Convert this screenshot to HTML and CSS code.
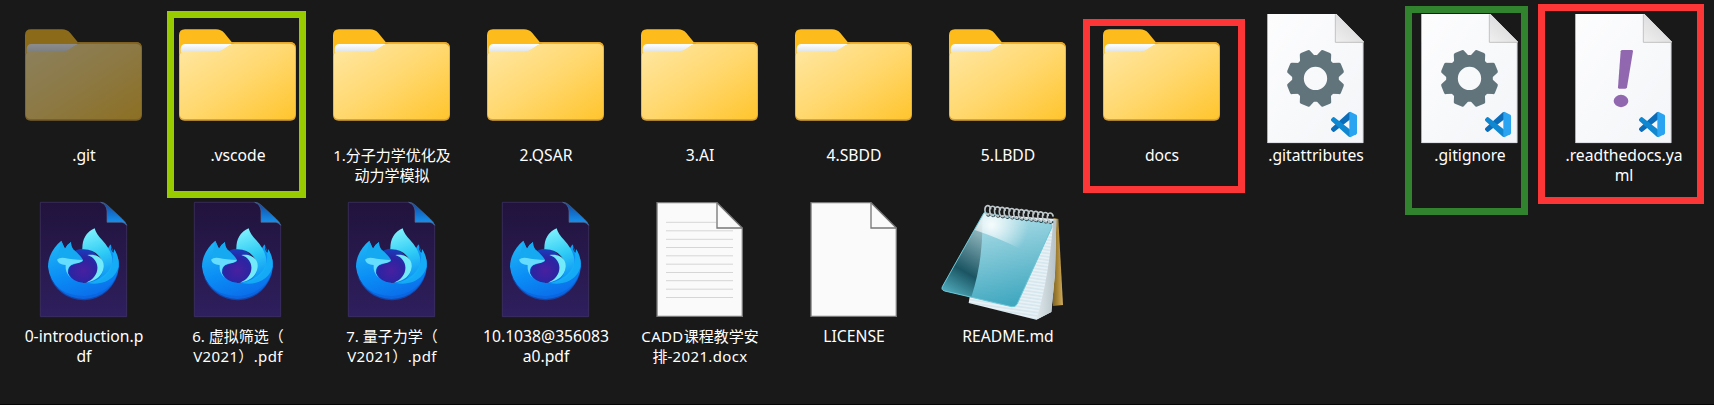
FILE: index.html
```html
<!DOCTYPE html>
<html lang="zh-CN">
<head>
<meta charset="utf-8">
<title>Files</title>
<link rel="stylesheet" href="styles.css">
</head>
<body>
<svg class="defs" aria-hidden="true">
  <defs>
    <linearGradient id="folder-front" x1="0" y1="0" x2="1" y2="1">
      <stop offset="0" stop-color="#ffe8a4"/><stop offset=".5" stop-color="#ffd86f"/><stop offset="1" stop-color="#ffc52e"/>
    </linearGradient>
    <linearGradient id="folder-paper" x1="0" y1="0" x2="0" y2="1">
      <stop offset="0" stop-color="#fff"/><stop offset=".6" stop-color="#e3e8ec"/><stop offset="1" stop-color="#fbe6ab"/>
    </linearGradient>
    <linearGradient id="sheet" x1="0" y1="0" x2="1" y2="1">
      <stop offset="0" stop-color="#fdfdfe"/><stop offset="1" stop-color="#f3f5f8"/>
    </linearGradient>
    <linearGradient id="sheet-fold" x1="0" y1="1" x2=".6" y2=".3">
      <stop offset="0" stop-color="#f0f0f0"/><stop offset="1" stop-color="#dcdcde"/>
    </linearGradient>
    <linearGradient id="fx-page" x1="0" y1="0" x2="0" y2="1">
      <stop offset="0" stop-color="#21133c"/><stop offset="1" stop-color="#2e1f5e"/>
    </linearGradient>
    <linearGradient id="fx-fold" x1="0" y1="0" x2="0" y2="1">
      <stop offset="0" stop-color="#0b4aa5"/><stop offset="1" stop-color="#1a9af5"/>
    </linearGradient>
    <linearGradient id="fx-body" x1=".2" y1="0" x2=".6" y2="1">
      <stop offset="0" stop-color="#1fb5f5"/><stop offset=".55" stop-color="#0a8cf5"/><stop offset="1" stop-color="#0a6cea"/>
    </linearGradient>
    <linearGradient id="fx-tail" x1=".3" y1="0" x2=".5" y2="1">
      <stop offset="0" stop-color="#80f2fc"/><stop offset=".5" stop-color="#30ccf5"/><stop offset="1" stop-color="#0a90f5"/>
    </linearGradient>
    <radialGradient id="fx-core" cx=".5" cy=".65" r=".6">
      <stop offset="0" stop-color="#48209f"/><stop offset=".6" stop-color="#2c24a2"/><stop offset="1" stop-color="#1b3ab8"/>
    </radialGradient>
    <linearGradient id="np-cover" x1=".2" y1="0" x2=".5" y2="1">
      <stop offset="0" stop-color="#b9e4ec"/><stop offset=".45" stop-color="#7cc6d6"/><stop offset="1" stop-color="#35a3bc"/>
    </linearGradient>
    <linearGradient id="np-shade" x1=".6" y1="0" x2=".3" y2="1">
      <stop offset="0" stop-color="#a4c7cd"/><stop offset=".65" stop-color="#1b5563"/><stop offset="1" stop-color="#4faabb"/>
    </linearGradient>
    <radialGradient id="np-glow" cx="215" cy="105" r="110" gradientUnits="userSpaceOnUse">
      <stop offset="0" stop-color="#fff" stop-opacity=".9"/><stop offset="1" stop-color="#fff" stop-opacity="0"/>
    </radialGradient>
    <linearGradient id="np-board" x1="0" y1="0" x2="1" y2="0">
      <stop offset="0" stop-color="#7d6424"/><stop offset=".6" stop-color="#b28d3c"/><stop offset="1" stop-color="#cfae62"/>
    </linearGradient>
    <linearGradient id="np-side" x1="0" y1="0" x2="1" y2="0">
      <stop offset="0" stop-color="#dfe8ec"/><stop offset="1" stop-color="#b5c1c7"/>
    </linearGradient>
    <pattern id="np-rules" width="20" height="10" patternUnits="userSpaceOnUse" patternTransform="rotate(8)">
      <path d="M0 5H20" stroke="#7fb5c9" stroke-width="1.5" opacity=".6"/>
    </pattern>

    <symbol id="folder" viewBox="0 0 154 132">
      <g transform="translate(-6 -13) scale(.33333)">
        <path d="M75 160V106Q75 88 93 88H186Q201 88 211 99L233 126H408Q426 126 426 144V200H75Z" fill="#fdbc1b"/>
        <path d="M234 126H410Q424 128 424 142H220Z" fill="#e5a628"/>
        <path d="M80 165V146Q81 132 94 132H250V160H80Z" fill="url(#folder-paper)"/>
        <path d="M75 166Q77 156 90 156H188Q200 156 208 150L226 137Q233 132 242 132H410Q426 132 426 148V345Q426 362 409 362H92Q75 362 75 345Z" fill="#d9a43f"/>
        <path d="M77 168Q78 154 92 154H188Q200 154 208 148L226 136Q233 131 242 131H408Q423 132 424 147V342Q424 357 408 357H93Q77 357 77 342Z" fill="url(#folder-front)"/>
      </g>
    </symbol>

    <symbol id="vs-sheet" viewBox="0 0 154 132">
      <g transform="translate(-178 -13) scale(.33333)">
        <path d="M622 42H829L910 124V429H622Z" fill="url(#sheet)"/>
        <path d="M623 428H909V126" fill="none" stroke="#c9ccd1" stroke-width="2"/>
        <path d="M829 42L910 124V128H826V42Z" fill="url(#sheet-fold)"/>
        <path d="M826 43V127H910" fill="none" stroke="#b9b9bb" stroke-width="2.5"/>
        <path d="M871 336V358L823 395Q820 397 817 394L813 389Q812 386 815 383L864 339Q867 335 871 336Z" fill="#0b6db9"/>
        <path d="M871 411V389L823 352Q820 350 817 353L813 358Q812 361 815 364L864 408Q867 412 871 411Z" fill="#0f87d1"/>
        <path d="M871 335L889 344Q891 345 891 348V399Q891 402 889 403L871 412Q868 411 868 408V339Q868 336 871 335Z" fill="#2aa4f1"/>
      </g>
    </symbol>
    <symbol id="gear" viewBox="0 0 154 132">
      <g transform="translate(77.5 65.4) scale(.33333)" fill="#62747b">
        <path id="tooth" d="M-25 -60L-17 -82Q-16 -87 -11 -87H11Q16 -87 17 -82L25 -60Z" transform="rotate(22.5)"/>
        <use href="#tooth" transform="rotate(45)"/><use href="#tooth" transform="rotate(90)"/><use href="#tooth" transform="rotate(135)"/>
        <use href="#tooth" transform="rotate(180)"/><use href="#tooth" transform="rotate(225)"/><use href="#tooth" transform="rotate(270)"/><use href="#tooth" transform="rotate(315)"/>
        <circle r="52.5" fill="none" stroke="#62747b" stroke-width="35"/>
      </g>
    </symbol>
    <symbol id="bang" viewBox="0 0 154 132">
      <g transform="translate(-156 -13) scale(.33333)" fill="#9168b0">
        <path d="M697 150H725Q729 150 729 154L711 262Q710 266 706 266H687Q684 266 684 262L692 154Q693 150 697 150Z"/>
        <ellipse cx="693" cy="303" rx="22" ry="18.5"/>
      </g>
    </symbol>

    <symbol id="fx-pdf" viewBox="0 0 154 132">
      <g transform="translate(-6 -4) scale(.33333)">
        <path d="M121 37H303Q313 40 320 51L380 104V380H121Z" fill="url(#fx-page)" stroke="#42376a" stroke-width="2"/>
        <path d="M302 37Q320 43 321 63V97H366Q375 98 380 106Q376 94 366 86L320 44Q312 37 302 37Z" fill="url(#fx-fold)" stroke="#51658d" stroke-width="2"/>
        <path d="M184 152Q190 167 195 176Q202 163 213 156Q212 168 219 178L249 205V278C280 279 298 252 292 225L330 165Q334 160 333 177Q336 185 341 190L342 178Q357 200 357 230A107 107 0 0 1 144 230C144 200 160 172 184 152Z" fill="url(#fx-body)"/>
        <path d="M146 248A107 107 0 0 0 356 240C342 292 296 318 248 318C198 317 160 292 146 248Z" fill="#0a5fdb" opacity=".6"/>
        <circle cx="250" cy="227" r="51" fill="url(#fx-core)"/>
        <path d="M284 115Q288 132 307 151Q332 178 337 208C340 240 320 266 282 278C306 262 318 234 305 210Q286 176 247 178Q246 132 284 115Z" fill="url(#fx-tail)"/>
        <path d="M262 195C292 190 314 207 311 232C308 256 290 272 258 278C302 262 304 208 262 195Z" fill="#72eafa"/>
        <path d="M333 164C351 210 334 262 262 279C335 292 366 238 354 204Q350 187 342 177L341 190Q335 181 333 164Z" fill="#18b2f6" opacity=".85"/>
        <path d="M184 152Q190 167 195 176Q202 163 213 156Q212 168 219 178Q236 190 249 209L247 215Q225 221 214 226Q203 234 205 249L196 226Q170 220 172 209Z" fill="#14a9f1"/>
        <path d="M171 209Q179 201 195 204Q216 208 249 210Q243 219 228 220Q210 223 205 235Q199 248 212 264Q195 248 197 225Q175 223 171 209Z" fill="#66dcff"/>
      </g>
    </symbol>

    <symbol id="blank" viewBox="0 0 154 132">
      <g transform="translate(8 -4) scale(.33333)">
        <path d="M81 38H261L337 114V379H81Z" fill="#fafafa" stroke="#777" stroke-width="4"/>
        <path d="M261 38V114H337" fill="none" stroke="#777" stroke-width="4"/>
      </g>
    </symbol>
    <symbol id="lined" viewBox="0 0 154 132">
      <use href="#blank"/>
      <path d="M44 28.3H94M44 36.8H111M44 45.3H111M44 53.5H111M44 61.8H111M44 70.2H111M44 78.5H111M44 86.7H111M44 95.2H111M44 103.5H111" stroke="#d6d6d6" stroke-width="1"/>
    </symbol>

    <symbol id="notepad" viewBox="0 0 154 132">
      <g transform="translate(-10 -4) scale(.33333)">
        <path d="M400 83L415 87L429 345L398 348Z" fill="url(#np-board)"/>
        <path d="M190 72L409 87L405 250L394 366L349 389L146 339Z" fill="#e8f1f5"/>
        <path d="M190 72L400 90Q392 250 349 389L146 339Z" fill="url(#np-rules)"/>
        <path d="M400 88L409 87L405 250L394 366L349 389Q388 260 400 88Z" fill="url(#np-side)"/>
        <path d="M192 68L392 102Q398 104 395 113L291 343Q286 352 275 350L74 303Q63 300 67 290Z" fill="url(#np-cover)" opacity=".93"/>
        <path d="M190 74L67 290Q64 300 74 303L154 321Q190 210 187 90Z" fill="url(#np-shade)"/>
        <path d="M192 68L392 102L350 205Q270 155 164 120Z" fill="url(#np-glow)"/>
        <path d="M192 68L392 102Q398 104 395 113L291 343Q286 352 275 350L74 303Q63 300 67 290Z" fill="none" stroke="#69c5d5" stroke-width="3"/>
        <g id="rings" fill="none" stroke-linecap="round">
          <path d="M211 74Q203 82 200 72" stroke="#233e46" stroke-width="5"/>
          <path d="M206 75C191 73 192 47 203 47Q210 47 212 56" stroke="#bec7ca" stroke-width="5"/>
        </g>
        <use href="#rings" x="14.4" y="1.7"/><use href="#rings" x="28.8" y="3.4"/><use href="#rings" x="43.2" y="5.1"/><use href="#rings" x="57.6" y="6.8"/><use href="#rings" x="72" y="8.5"/><use href="#rings" x="86.4" y="10.2"/><use href="#rings" x="100.8" y="11.9"/><use href="#rings" x="115.2" y="13.6"/><use href="#rings" x="129.6" y="15.3"/><use href="#rings" x="144" y="17"/><use href="#rings" x="158.4" y="18.7"/><use href="#rings" x="172.8" y="20.4"/><use href="#rings" x="187.2" y="22"/>
      </g>
    </symbol>
  </defs>
</svg>

<main class="files">
  <div class="item item--hidden"><svg class="icon"><use href="#folder"/></svg><span class="label">.git</span></div>
  <div class="item"><svg class="icon"><use href="#folder"/></svg><span class="label">.vscode</span><i class="frame frame--lime"></i></div>
  <div class="item"><svg class="icon"><use href="#folder"/></svg><span class="label label--han">1.分子力学优化及<br>动力学模拟</span></div>
  <div class="item"><svg class="icon"><use href="#folder"/></svg><span class="label">2.QSAR</span></div>
  <div class="item"><svg class="icon"><use href="#folder"/></svg><span class="label">3.AI</span></div>
  <div class="item"><svg class="icon"><use href="#folder"/></svg><span class="label">4.SBDD</span></div>
  <div class="item"><svg class="icon"><use href="#folder"/></svg><span class="label">5.LBDD</span></div>
  <div class="item"><svg class="icon"><use href="#folder"/></svg><span class="label">docs</span><i class="frame frame--docs"></i></div>
  <div class="item"><svg class="icon"><use href="#vs-sheet"/><use href="#gear"/></svg><span class="label">.gitattributes</span></div>
  <div class="item"><svg class="icon"><use href="#vs-sheet"/><use href="#gear"/></svg><span class="label">.gitignore</span><i class="frame frame--green"></i></div>
  <div class="item"><svg class="icon"><use href="#vs-sheet"/><use href="#bang"/></svg><span class="label">.readthedocs.ya<br>ml</span><i class="frame frame--yaml"></i></div>
  <div class="item"><svg class="icon"><use href="#fx-pdf"/></svg><span class="label">0-introduction.p<br>df</span></div>
  <div class="item"><svg class="icon"><use href="#fx-pdf"/></svg><span class="label label--han">6. 虚拟筛选（<br><span class="latin">V2021）.pdf</span></span></div>
  <div class="item"><svg class="icon"><use href="#fx-pdf"/></svg><span class="label label--han">7. 量子力学（<br><span class="latin">V2021）.pdf</span></span></div>
  <div class="item"><svg class="icon"><use href="#fx-pdf"/></svg><span class="label">10.1038@356083<br>a0.pdf</span></div>
  <div class="item"><svg class="icon"><use href="#lined"/></svg><span class="label label--han"><span class="latin">CADD</span>课程教学安<br>排<span class="latin">-2021.docx</span></span></div>
  <div class="item"><svg class="icon"><use href="#blank"/></svg><span class="label">LICENSE</span></div>
  <div class="item"><svg class="icon"><use href="#notepad"/></svg><span class="label">README.md</span></div>
</main>
</body>
</html>
```
FILE: styles.css
```css
* { box-sizing: border-box; }

body {
  margin: 0;
  height: 405px;
  overflow: hidden;
  background: #191919;
  border-bottom: 1px solid #050505;
  color: #fff;
  font-family: "Noto Sans", "Noto Sans CJK SC", sans-serif;
  font-size: 15.7px;
  line-height: 20px;
}

.defs {
  display: block;
  width: 0;
  height: 0;
}

.files {
  display: grid;
  grid-template-columns: repeat(11, 154px);
  grid-auto-rows: 181px;
  padding: 13px 0 0 6px;
}

.item {
  position: relative;
  display: flex;
  flex-direction: column;
  align-items: center;
}

.icon {
  display: block;
  flex: none;
  width: 154px;
  height: 132px;
}

.item--hidden .icon { opacity: .5; }

.label {
  padding-left: 2px;
  text-align: center;
  white-space: nowrap;
}

.label--han { font-size: 15px; }

.latin { letter-spacing: .35px; }

.frame {
  position: absolute;
  border: 7px solid #fc3636;
}

.frame--lime {
  left: 7px;
  top: -2px;
  width: 139px;
  height: 187px;
  border-color: #99cc00;
}

.frame--docs {
  left: -1px;
  top: 6px;
  width: 162px;
  height: 174px;
}

.frame--green {
  left: 13px;
  top: -7px;
  width: 123px;
  height: 209px;
  border-color: #31832e;
}

.frame--yaml {
  left: -8px;
  top: -9px;
  width: 166px;
  height: 200px;
}
```
